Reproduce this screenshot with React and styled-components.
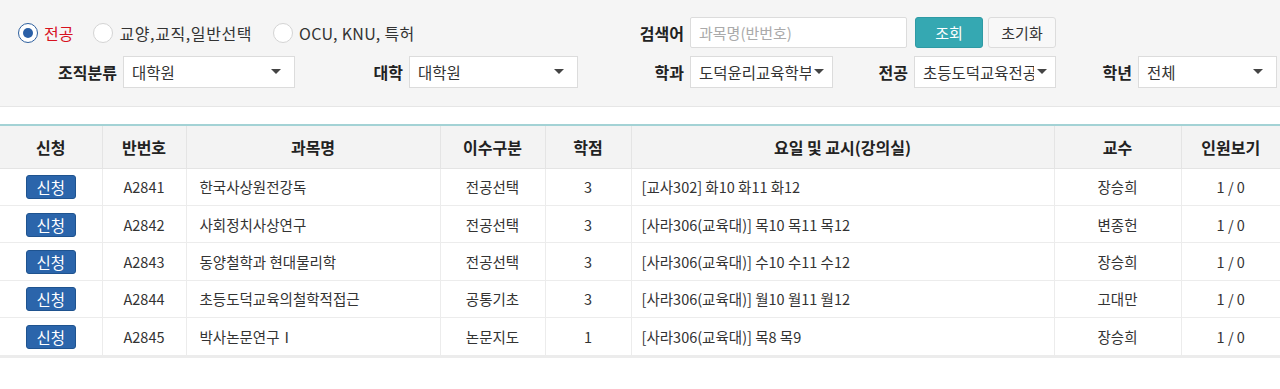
import React from "react";
import styled, { createGlobalStyle } from "styled-components";

const Global = createGlobalStyle`
  html, body { margin: 0; padding: 0; background: #fff; }
  body { font-family: "Noto Sans CJK KR", "Noto Sans", sans-serif; color: #333; }
  * { box-sizing: border-box; }
`;

const Panel = styled.div`
  background: #f5f5f5;
  border-bottom: 1px solid #e6e6e6;
  height: 107px;
  padding-top: 17px;
`;

const Row = styled.div`
  display: flex;
  align-items: center;
  height: 31px;
  & + & { margin-top: 8px; }
`;

const RadioGroup = styled.div`
  width: 578px;
  display: flex;
  align-items: center;
  padding-left: 18px;
`;

const RadioItem = styled.label`
  display: flex;
  align-items: center;
  gap: 6px;
  margin-right: ${(p) => p.$mr || 0}px;
  font-size: 16px;
  color: ${(p) => (p.$checked ? "#d7121f" : "#333")};
  letter-spacing: ${(p) => p.$ls || 0}px;
`;

const RadioCircle = styled.span`
  width: 20px;
  height: 20px;
  flex: none;
  border-radius: 50%;
  background: #fff;
  border: 1px solid ${(p) => (p.$checked ? "#2d5f9e" : "#d4d4d4")};
  display: flex;
  align-items: center;
  justify-content: center;
  &::after {
    content: "";
    width: 10px;
    height: 10px;
    border-radius: 50%;
    background: ${(p) => (p.$checked ? "#2a5fa6" : "transparent")};
  }
`;

const Label = styled.span`
  width: ${(p) => p.$w}px;
  text-align: right;
  padding-right: 6px;
  font-weight: 700;
  font-size: 16px;
  color: #222;
  flex: none;
`;

const Input = styled.div`
  width: 217px;
  height: 31px;
  background: #fff;
  border: 1px solid #dcdcdc;
  border-radius: 2px;
  padding-left: 8px;
  display: flex;
  align-items: center;
  font-size: 15px;
  color: #aaa;
`;

const Button = styled.button`
  height: 31px;
  width: 68px;
  margin-left: ${(p) => p.$ml}px;
  border-radius: 3px;
  font-family: inherit;
  font-size: 15px;
  border: 1px solid ${(p) => (p.$primary ? "#2e9aa4" : "#dcdcdc")};
  background: ${(p) => (p.$primary ? "#35a8b2" : "#f8f8f8")};
  color: ${(p) => (p.$primary ? "#fff" : "#333")};
  padding: 0;
`;

const Select = styled.div`
  width: ${(p) => p.$w}px;
  height: 32px;
  background: #fff;
  border: 1px solid #dcdcdc;
  display: flex;
  align-items: center;
  padding-left: 8px;
  font-size: 15.5px;
  color: #333;
  flex: none;
  overflow: hidden;
  white-space: nowrap;
`;

const SelectText = styled.span`
  flex: 1;
  overflow: hidden;
`;

const Arrow = styled.span`
  flex: none;
  width: 0;
  height: 0;
  margin: 0 ${(p) => p.$mr || 13}px 0 3px;
  border-left: 5px solid transparent;
  border-right: 5px solid transparent;
  border-top: 5px solid #444;
`;

const TableWrap = styled.div`
  margin-top: 17px;
  border-top: 2px solid #a3d2d5;
  border-bottom: 3px solid #ececec;
`;

const Table = styled.table`
  width: 100%;
  border-collapse: collapse;
  table-layout: fixed;
  font-size: 14.5px;
`;

const Th = styled.th`
  height: 42px;
  padding: 0;
  background: #f3f3f3;
  font-weight: 700;
  font-size: 16px;
  color: #222;
  border-left: 1px solid #e4e4e4;
  border-bottom: 1px solid #e4e4e4;
  &:first-child { border-left: none; }
`;

const Td = styled.td`
  height: 37.4px;
  text-align: ${(p) => (p.$left ? "left" : "center")};
  padding: 0 ${(p) => (p.$left ? p.$pl : 0)}px;
  border-left: 1px solid #ececec;
  border-bottom: 1px solid #ececec;
  color: #333;
  white-space: nowrap;
  &:first-child { border-left: none; }
  tr:last-child & { border-bottom: none; }
`;

const ApplyBtn = styled.span`
  display: inline-flex;
  align-items: center;
  justify-content: center;
  width: 50px;
  height: 24px;
  border-radius: 3px;
  background: #2b65ab;
  border: 1px solid #1f538f;
  color: #fff;
  font-size: 15.5px;
  vertical-align: middle;
`;

const cols = [102, 84, 254, 105, 86, 423, 127, 99];

const rows = [
  ["A2841", "한국사상원전강독", "전공선택", "3", "[교사302] 화10 화11 화12", "장승희"],
  ["A2842", "사회정치사상연구", "전공선택", "3", "[사라306(교육대)] 목10 목11 목12", "변종헌"],
  ["A2843", "동양철학과 현대물리학", "전공선택", "3", "[사라306(교육대)] 수10 수11 수12", "장승희"],
  ["A2844", "초등도덕교육의철학적접근", "공통기초", "3", "[사라306(교육대)] 월10 월11 월12", "고대만"],
  ["A2845", "박사논문연구Ⅰ", "논문지도", "1", "[사라306(교육대)] 목8 목9", "장승희"],
];

const selects = [
  { label: "조직분류", lw: 123, w: 172, v: "대학원" },
  { label: "대학", lw: 114, w: 169, v: "대학원" },
  { label: "학과", lw: 112, w: 143, v: "도덕윤리교육학부", ar: 8 },
  { label: "전공", lw: 81, w: 142, v: "초등도덕교육전공", ar: 8 },
  { label: "학년", lw: 82, w: 139, v: "전체" },
];

export default function App() {
  return (
    <>
      <Global />
      <Panel>
        <Row>
          <RadioGroup>
            <RadioItem $checked $mr={20}>
              <RadioCircle $checked />
              전공
            </RadioItem>
            <RadioItem $mr={21} $ls={0.6}>
              <RadioCircle />
              교양,교직,일반선택
            </RadioItem>
            <RadioItem $ls={0.3}>
              <RadioCircle />
              OCU, KNU, 특허
            </RadioItem>
          </RadioGroup>
          <Label $w={112}>검색어</Label>
          <Input>과목명(반번호)</Input>
          <Button $primary $ml={8}>조회</Button>
          <Button $ml={5}>초기화</Button>
        </Row>
        <Row>
          {selects.map((s) => (
            <React.Fragment key={s.label}>
              <Label $w={s.lw}>{s.label}</Label>
              <Select $w={s.w}>
                <SelectText>{s.v}</SelectText>
                <Arrow $mr={s.ar} />
              </Select>
            </React.Fragment>
          ))}
        </Row>
      </Panel>
      <TableWrap>
        <Table>
          <colgroup>
            {cols.map((c, i) => (
              <col key={i} style={{ width: c }} />
            ))}
          </colgroup>
          <thead>
            <tr>
              {["신청", "반번호", "과목명", "이수구분", "학점", "요일 및 교시(강의실)", "교수", "인원보기"].map((h) => (
                <Th key={h}>{h}</Th>
              ))}
            </tr>
          </thead>
          <tbody>
            {rows.map((r) => (
              <tr key={r[0]}>
                <Td><ApplyBtn>신청</ApplyBtn></Td>
                <Td>{r[0]}</Td>
                <Td $left $pl={13}>{r[1]}</Td>
                <Td>{r[2]}</Td>
                <Td>{r[3]}</Td>
                <Td $left $pl={10}>{r[4]}</Td>
                <Td>{r[5]}</Td>
                <Td>1 / 0</Td>
              </tr>
            ))}
          </tbody>
        </Table>
      </TableWrap>
    </>
  );
}
